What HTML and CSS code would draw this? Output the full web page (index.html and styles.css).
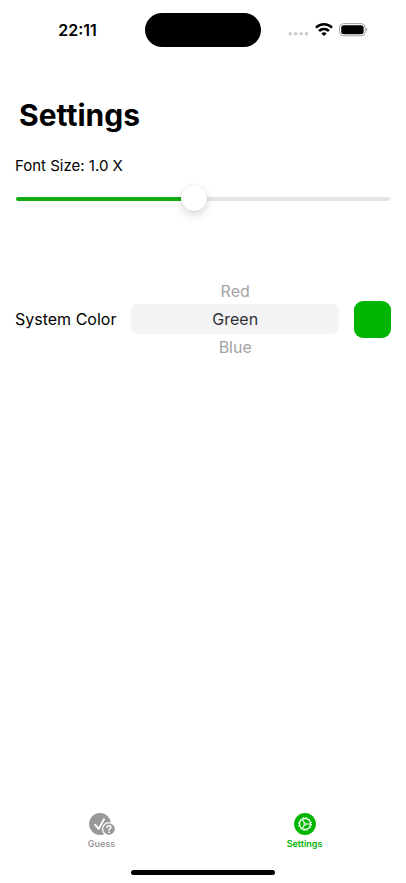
FILE: index.html
```html
<!DOCTYPE html>
<html lang="en">
<head>
    <meta charset="UTF-8">
    <meta name="viewport" content="width=device-width, initial-scale=1.0">
    <title>Settings</title>
    <link rel="stylesheet" href="styles.css">
</head>
<body>

<header class="status-bar">
    <time class="clock">22:11</time>
    <div class="island"></div>
    <div class="status-icons">
        <svg class="signal" width="21" height="14" viewBox="0 0 21 14" fill="#cbcbcb">
            <circle cx="2.2" cy="10.8" r="1.8"/>
            <circle cx="7.6" cy="10.8" r="1.8"/>
            <circle cx="13.1" cy="10.8" r="1.8"/>
            <circle cx="18.6" cy="10.8" r="1.8"/>
        </svg>
        <svg class="wifi" width="18" height="14" viewBox="0 0 18 14" fill="none" stroke="#000" stroke-width="2.5">
            <path d="M1 4.6a11.4 11.4 0 0 1 16 0"/>
            <path d="M4.1 8a7 7 0 0 1 9.8 0"/>
            <path d="M9 13 6.4 10.4a3.8 3.8 0 0 1 5.2 0z" fill="#000" stroke="none"/>
        </svg>
        <svg class="battery" width="29" height="14" viewBox="0 0 29 14">
            <rect x="0.6" y="0.6" width="25.6" height="12.2" rx="4" fill="none" stroke="#a0a0a0" stroke-width="1"/>
            <rect x="2.2" y="2.2" width="22.4" height="9" rx="2.6" fill="#000"/>
            <path d="M27.2 4.8c1.6.6 1.6 3.2 0 3.8z" fill="#a0a0a0"/>
        </svg>
    </div>
</header>

<main class="content">
    <h1>Settings</h1>

    <div class="font-size">
        <label for="fontSize">Font Size: <span id="fontSizeText">1.0</span> X</label>
        <input type="range" id="fontSize" min="0.55" max="1.5" step="0.05" value="1">
    </div>

    <div class="system-color">
        <span id="colorLabel">System Color</span>
        <div class="picker" role="radiogroup" aria-labelledby="colorLabel">
            <label class="option"><input type="radio" name="color" value="red">Red</label>
            <label class="option"><input type="radio" name="color" value="green" checked>Green</label>
            <label class="option"><input type="radio" name="color" value="blue">Blue</label>
        </div>
        <div class="swatch"></div>
    </div>
</main>

<nav class="tab-bar">
    <a class="tab" href="#guess">
        <svg width="28" height="24" viewBox="0 0 28 24">
            <circle cx="12" cy="12" r="10.9" fill="#999"/>
            <path d="M7.2 12.8l3.5 4.1L16 7.2" fill="none" stroke="#fff" stroke-width="1.9" stroke-linecap="round" stroke-linejoin="round"/>
            <circle cx="21" cy="17" r="7" fill="#fff"/>
            <circle cx="21" cy="17" r="5.8" fill="#999"/>
            <path d="M19.1 15.5c0-2.4 3.9-2.3 3.9-.1 0 1.4-1.9 1.3-1.9 2.7" fill="none" stroke="#fff" stroke-width="1.4" stroke-linecap="round"/>
            <circle cx="21.1" cy="20.2" r="0.9" fill="#fff"/>
        </svg>
        <span>Guess</span>
    </a>
    <a class="tab active" href="#settings" aria-current="page">
        <svg width="24" height="24" viewBox="0 0 24 24">
            <circle cx="12" cy="12" r="10.9" fill="#00b500"/>
            <g fill="none" stroke="#fff">
                <circle cx="12" cy="12" r="6.5" stroke-width="1" stroke-dasharray="1.6 1.8"/>
                <circle cx="12" cy="12" r="5.5" stroke-width="1.3"/>
                <path d="M12.8 12h4.4M11.6 11.3l-2.3-4M11.6 12.7l-2.3 4" stroke-width="1.1"/>
                <circle cx="12" cy="12" r="1.2" stroke-width="0.9"/>
            </g>
        </svg>
        <span>Settings</span>
    </a>
</nav>

<div class="home-indicator"></div>

<script>
    const fontSize = document.getElementById('fontSize');
    const fontSizeText = document.getElementById('fontSizeText');

    // Fill the track up to the thumb
    function updateSlider() {
        const percent = (fontSize.value - fontSize.min) / (fontSize.max - fontSize.min) * 100;
        fontSize.style.setProperty('--fill', percent + '%');
        fontSizeText.textContent = Number(fontSize.value).toFixed(1);
    }

    fontSize.addEventListener('input', updateSlider);
    updateSlider();
</script>

</body>
</html>
```
FILE: styles.css
```css
* {
    box-sizing: border-box;
}

body {
    font-family: Inter, 'Liberation Sans', sans-serif;
    font-size: 15px;
    line-height: 20px;
    margin: 0;
    min-height: 100vh;
    background-color: #fff;
    color: #000;
    display: flex;
    flex-direction: column;
}

/* Status bar */
.status-bar {
    display: grid;
    grid-template-columns: 1fr 116px 1fr;
    align-items: center;
    padding-top: 13px;
}

.clock {
    padding-left: 10px;
    text-align: center;
    font-size: 16px;
    font-weight: 600;
}

.island {
    height: 34px;
    border-radius: 17px;
    background-color: #000;
}

.status-icons {
    display: flex;
    justify-content: flex-end;
    align-items: center;
    gap: 6px;
    padding-right: 38px;
}

/* Content */
.content {
    flex: 1;
    padding: 48px 15px 0;
}

h1 {
    margin: 0;
    padding-left: 4px;
    font-size: 30px;
    line-height: 40px;
    font-weight: 700;
}

.font-size {
    display: flex;
    flex-direction: column;
    gap: 10px;
    padding-top: 21px;
}

input[type="range"] {
    --fill: 47%;
    appearance: none;
    height: 26px;
    margin: 0 1px;
    background: none;
}

input[type="range"]::-webkit-slider-runnable-track {
    height: 4px;
    border-radius: 2px;
    background: linear-gradient(to right, #12ad12 var(--fill), #e4e4e5 var(--fill));
}

input[type="range"]::-webkit-slider-thumb {
    appearance: none;
    width: 26px;
    height: 26px;
    margin-top: -12px;
    border-radius: 50%;
    background-color: #fff;
    box-shadow: 0 0 1px rgba(0, 0, 0, 0.2), 0 4px 8px rgba(0, 0, 0, 0.15);
}

.system-color {
    display: flex;
    align-items: center;
    gap: 15px;
    padding-top: 66px;
    font-size: 16px;
}

.picker {
    flex: 1;
    display: flex;
    flex-direction: column;
}

.option {
    padding: 3px;
    text-align: center;
    color: #a3a3a3;
    cursor: pointer;
}

.option:has(input:checked) {
    padding: 5px;
    border-radius: 7px;
    background-color: #f3f3f5;
    color: #303033;
}

.option input {
    position: absolute;
    opacity: 0;
    margin: 0;
}

.swatch {
    width: 37px;
    height: 37px;
    border-radius: 9px;
    background-color: #00b500;
}

/* Tab bar */
.tab-bar {
    display: flex;
}

.tab {
    flex: 1;
    display: flex;
    flex-direction: column;
    align-items: center;
    color: #999;
    font-size: 9px;
    line-height: 16px;
    font-weight: 600;
    text-decoration: none;
}

.tab.active {
    color: #00b500;
}

.home-indicator {
    width: 144px;
    height: 5px;
    margin: 18px auto 8px;
    border-radius: 3px;
    background-color: #000;
}
```
